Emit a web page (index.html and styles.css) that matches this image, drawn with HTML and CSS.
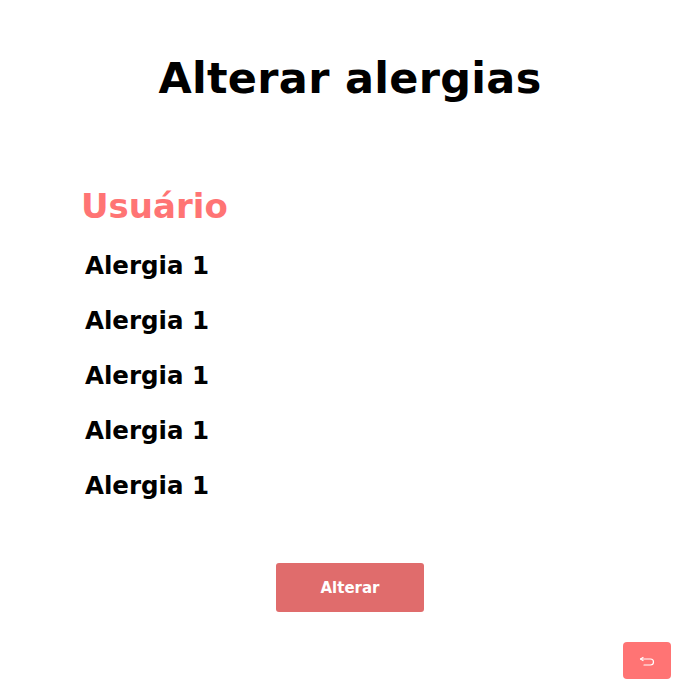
FILE: index.html
```html
<!DOCTYPE html>
<html lang="pt">
<head>
<meta charset="utf-8">
<link rel="stylesheet" href="styles.css">
</head>
<body>
<main class="page">
  <h1 class="title">Alterar alergias</h1>
  <section class="list">
    <h2 class="user">Usuário</h2>
    <p class="item">Alergia 1</p>
    <p class="item">Alergia 1</p>
    <p class="item">Alergia 1</p>
    <p class="item">Alergia 1</p>
    <p class="item">Alergia 1</p>
  </section>
  <div class="actions">
    <button class="btn-main">Alterar</button>
  </div>
  <div class="back-row">
    <button class="btn-back" aria-label="Voltar">
      <svg width="16" height="10" viewBox="0 0 16 10" fill="none" stroke="#fff" stroke-width="1.2" stroke-linecap="round" stroke-linejoin="round">
        <path d="M4 1.5 L1.5 3 L4 4.5"/>
        <path d="M1.5 3 H11.5 A3 3 0 0 1 11.5 9 H5"/>
      </svg>
    </button>
  </div>
</main>
</body>
</html>
```
FILE: styles.css
```css
* { box-sizing: border-box; }
html, body { margin: 0; padding: 0; background: #fff; }
body { font-family: "DejaVu Sans", "Open Sans", sans-serif; color: #000; }
.page { width: 700px; height: 700px; display: flex; flex-direction: column; }
.title {
  margin: 47px 0 0;
  text-align: center;
  font-size: 43px;
  font-weight: 700;
  line-height: 62px;
  letter-spacing: 0.3px;
}
.list { padding: 73px 0 0 81px; display: flex; flex-direction: column; }
.user {
  margin: 0 0 8px;
  color: #ff7474;
  font-size: 34px;
  font-weight: 700;
  line-height: 48px;
}
.item {
  margin: 0;
  padding-left: 4px;
  font-size: 24.5px;
  font-weight: 700;
  line-height: 55px;
}
.actions { display: flex; justify-content: center; padding-top: 50px; }
.btn-main {
  width: 148px; height: 49px;
  border: 0; border-radius: 3px;
  background: #e06c6c; color: #fff;
  font-family: inherit; font-weight: 700; font-size: 15px;
}
.back-row { display: flex; justify-content: flex-end; padding: 30px 29px 0 0; }
.btn-back {
  width: 48px; height: 37px;
  border: 0; border-radius: 4px;
  background: #ff7474;
  display: flex; align-items: center; justify-content: center;
  padding: 0;
}
```
